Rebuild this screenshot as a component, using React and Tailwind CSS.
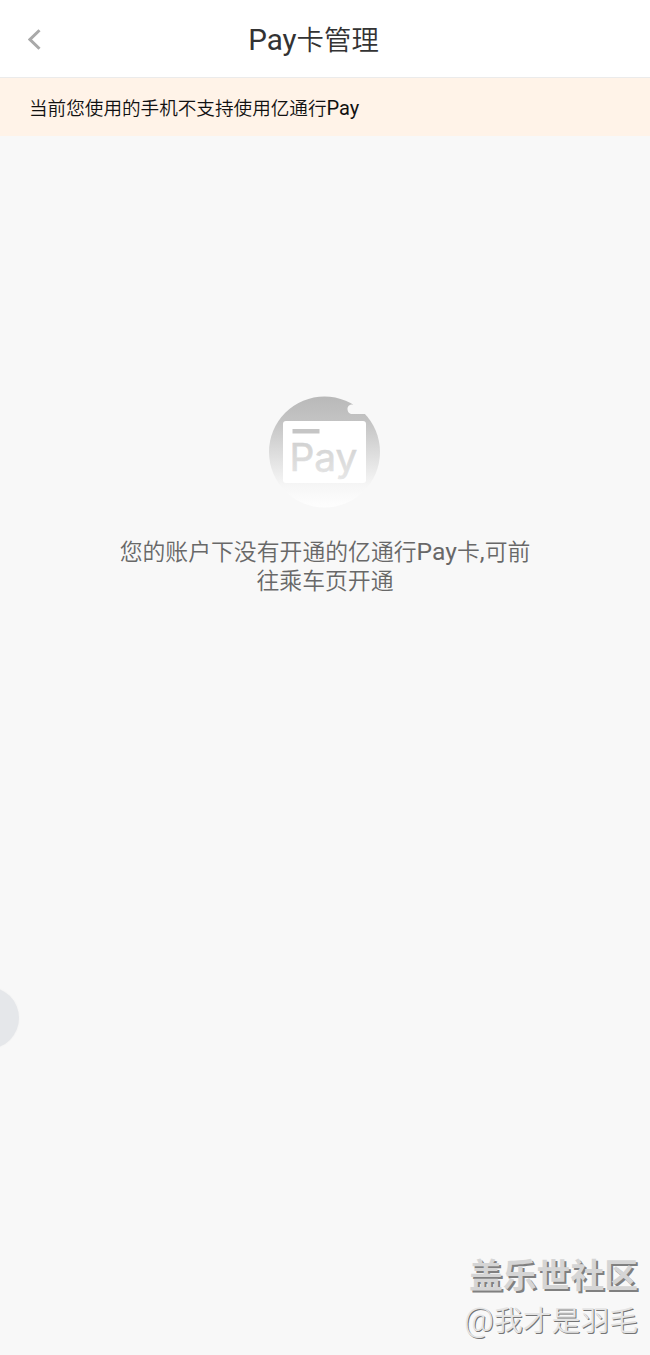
export default function App() {
  return (
    <div className="relative flex h-[1355px] w-[650px] flex-col overflow-hidden bg-[#f8f8f8] font-[Roboto,'Noto_Sans_CJK_SC',sans-serif] font-[350]">
      <Header>
        <Latin>Pay</Latin>卡管理
      </Header>

      {/* NOTICE */}
      <div className="h-[58px] shrink-0 bg-[#fff3e8] pl-[29px] text-[18.6px] leading-[62px] text-[#111]">
        当前您使用的手机不支持使用亿通行<Latin>Pay</Latin>
      </div>

      {/* EMPTY STATE */}
      <main className="flex flex-1 flex-col items-center pt-[260px]">
        <PayCardIcon />
        <p className="mt-[31px] text-center text-[22.85px] leading-[28.5px] text-[#686868]">
          您的账户下没有开通的亿通行<Latin>Pay</Latin>卡<Latin>,</Latin>可前
          <br />
          往乘车页开通
        </p>
      </main>

      {/* floating handle, half off screen */}
      <button
        aria-label="menu"
        className="absolute -left-[43px] top-[987px] size-[62px] rounded-full bg-[#e5e7ea] shadow-[0_0_2px_#eeeeee]"
      />

      <Watermark community="盖乐世社区" user="我才是羽毛" />
    </div>
  );
}

// latin glyphs run a little larger than the chinese ones
function Latin({ children }) {
  return <span className="text-[1.08em] font-normal leading-none">{children}</span>;
}

function Header({ children }) {
  return (
    <header className="grid h-[78px] shrink-0 grid-cols-[1fr_auto_1fr] items-center border-b border-[#ebebeb] bg-white pr-[23px]">
      <button aria-label="back" className="pl-[28px]">
        <svg width="13" height="21" viewBox="0 0 13 21" fill="none" className="mt-[2px]">
          <path d="M11.500 1.200 2 10.500l9.500 9.300" stroke="#a9a9a9" strokeWidth="3" />
        </svg>
      </button>
      <h1 className="pt-[4px] text-[27.4px] leading-[40px] text-[#333]">{children}</h1>
    </header>
  );
}

function PayCardIcon() {
  return (
    <svg width="112" height="112" viewBox="0 0 112 112" className="-ml-px">
      <defs>
        <linearGradient id="disc" x1="0" y1="0" x2="0" y2="1">
          <stop offset="0" stopColor="#b9b9b9" />
          <stop offset="0.22" stopColor="#c3c3c3" />
          <stop offset="0.5" stopColor="#dcdcdc" />
          <stop offset="0.8" stopColor="#f6f6f6" />
          <stop offset="1" stopColor="#fefefe" />
        </linearGradient>
        <linearGradient id="label" x1="0" y1="0" x2="0" y2="1">
          <stop offset="0.2" stopColor="#d2d2d2" />
          <stop offset="1" stopColor="#e6e6e6" />
        </linearGradient>
      </defs>
      <circle cx="55.5" cy="56" r="55.5" fill="url(#disc)" />
      {/* cloud notch on the rim */}
      <path d="M86 5 84 8.500c-4 0-5.500 2-5.500 4.500 0 3 2 5 5 5h18V4z" fill="#f8f8f8" />
      <rect x="14" y="25" width="83" height="62" rx="3" fill="#fff" />
      <rect x="23.500" y="33" width="27" height="4.500" fill="#c5c5c5" />
      <text
        x="20.500"
        y="74.500"
        textLength="68"
        lengthAdjust="spacingAndGlyphs"
        fill="url(#label)"
        stroke="url(#label)"
        strokeWidth="0.600"
        className="font-[Inter,sans-serif] text-[38px] font-normal"
      >
        Pay
      </text>
    </svg>
  );
}

function Watermark({ community, user }) {
  return (
    <div className="absolute bottom-[13px] right-[12px] flex flex-col items-end whitespace-nowrap">
      <p className="text-[33.8px] font-bold leading-[46px] text-[#d5d5d5] [text-shadow:2px_2px_0_#808080]">
        {community}
      </p>
      <p className="text-[28.8px] leading-[42px] text-[#e4e4e4] [text-shadow:1px_1px_0_#747474]">
        <span className="text-[1.14em] leading-none">@</span>
        {user}
      </p>
    </div>
  );
}
